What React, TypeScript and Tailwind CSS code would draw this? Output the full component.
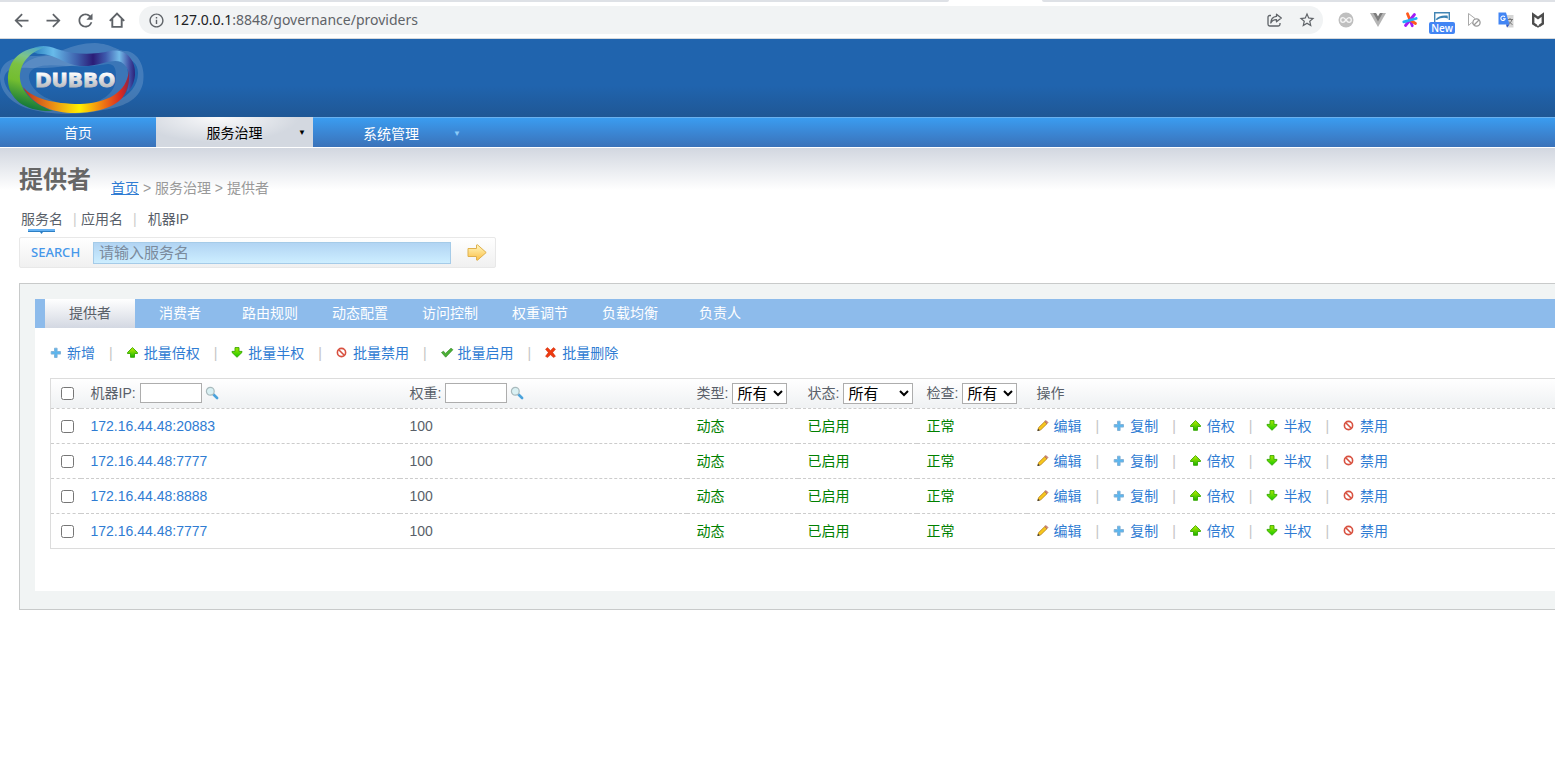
import type { ReactNode } from "react";
import { MdArrowBack, MdArrowForward, MdInfoOutline, MdRefresh, MdStarOutline } from "react-icons/md";

const menus = ["提供者", "消费者", "路由规则", "动态配置", "访问控制", "权重调节", "负载均衡", "负责人"];

const providers = [
  { ip: "172.16.44.48:20883", weight: 100 },
  { ip: "172.16.44.48:7777", weight: 100 },
  { ip: "172.16.44.48:8888", weight: 100 },
  { ip: "172.16.44.48:7777", weight: 100 },
];

const PlusIcon = () => (
  <svg width="12" height="12" viewBox="0 0 12 12" aria-hidden="true">
    <path d="M4.500 1.200h2.600v3.300h3.400v2.600H7.100v3.400H4.500V7.100H1.200V4.500h3.300z" fill="#5cb6ee" stroke="#7fb0d6" strokeWidth="0.9" strokeLinejoin="round" />
  </svg>
);

const UpIcon = () => (
  <svg width="12" height="12" viewBox="0 0 12 12" aria-hidden="true">
    <defs>
      <linearGradient id="up" x2="0" y2="1">
        <stop offset="0" stopColor="#c0f000" />
        <stop offset="1" stopColor="#18b400" />
      </linearGradient>
    </defs>
    <path d="M5.500.6 10.500 5.500v1H7.500v3.800h-4V6.500h-3v-1z" fill="url(#up)" stroke="#36a800" strokeWidth="0.9" />
  </svg>
);

const DownIcon = () => (
  <svg width="12" height="12" viewBox="0 0 12 12" aria-hidden="true">
    <defs>
      <linearGradient id="down" x2="0" y2="1">
        <stop offset="0" stopColor="#a5e800" />
        <stop offset="1" stopColor="#18c800" />
      </linearGradient>
    </defs>
    <path d="M4 .6h4v3.800h3v1L6 10.300 1 5.400v-1h3z" fill="url(#down)" stroke="#36a800" strokeWidth="0.9" />
  </svg>
);

const BanIcon = () => (
  <svg width="12" height="12" viewBox="0 0 12 12" fill="none" aria-hidden="true">
    <circle cx="5.500" cy="5.500" r="4.100" stroke="#d8503f" strokeWidth="1.600" />
    <path d="m2.700 2.700 5.600 5.600" stroke="#d8503f" strokeWidth="1.600" />
  </svg>
);

const CheckIcon = () => (
  <svg width="13" height="12" viewBox="0 0 13 12" aria-hidden="true">
    <path d="M.5 5.500 2.500 4.200l2 2.200 5.500-5.200 1.900 1.500L4.700 10.200z" fill="#4bb035" stroke="#378a28" strokeWidth="0.7" />
  </svg>
);

const DeleteIcon = () => (
  <svg width="12" height="12" viewBox="0 0 12 12" aria-hidden="true">
    <path d="M.5 2.200 2.500.6l3 2.800L8.500.6l2 1.600L7.700 5.600l2.800 3.700-2 1.200-3-2.700-3 2.700-2-1.200 2.800-3.700z" fill="#ee3a10" stroke="#c82c0c" strokeWidth="0.5" />
  </svg>
);

const PencilIcon = () => (
  <svg width="12" height="12" viewBox="0 0 12 12" aria-hidden="true">
    <path d="m.8 10.500.8-2.900L7.800 1.500 10 3.700 3.800 9.800z" fill="#f7c61c" stroke="#b5801c" strokeWidth="0.8" />
    <path d="M7.800 1.500 9 .5l2 2L10 3.700z" fill="#d98a7c" stroke="#a0604e" strokeWidth="0.6" />
    <path d="m.4 11 .7-2.300 1.700 1.700z" fill="#333" />
  </svg>
);

const SearchIcon = () => (
  <svg width="14" height="14" viewBox="0 0 14 14" fill="none" aria-hidden="true">
    <path d="m8.500 8.500 3.600 3.500" stroke="#4ba3dc" strokeWidth="2.600" strokeLinecap="round" />
    <circle cx="5.300" cy="5.300" r="3.900" fill="#d9f0f3" stroke="#a9babd" strokeWidth="1.200" />
  </svg>
);

const Logo = () => (
  <svg width="150" height="78" viewBox="0 0 150 78" role="img" aria-label="Dubbo">
    <defs>
      <linearGradient id="green" x1="0.7" x2="0.5" y2="1">
        <stop offset="0" stopColor="#4ba6cc" />
        <stop offset="0.2" stopColor="#7cc48a" />
        <stop offset="0.35" stopColor="#7cc142" />
        <stop offset="0.6" stopColor="#73bd30" />
        <stop offset="1" stopColor="#08703c" />
      </linearGradient>
      <linearGradient id="blue">
        <stop offset="0" stopColor="#2179b8" />
        <stop offset="0.22" stopColor="#68bbea" />
        <stop offset="0.45" stopColor="#3d5fac" />
        <stop offset="0.6" stopColor="#2b1c77" />
        <stop offset="0.72" stopColor="#3d5aad" />
        <stop offset="0.85" stopColor="#73bbe9" />
        <stop offset="0.95" stopColor="#3f4ca2" />
        <stop offset="1" stopColor="#2c2278" />
      </linearGradient>
      <linearGradient id="fire">
        <stop offset="0" stopColor="#b92f20" />
        <stop offset="0.25" stopColor="#e88218" />
        <stop offset="0.53" stopColor="#fff000" />
        <stop offset="0.76" stopColor="#ee7514" />
        <stop offset="0.92" stopColor="#d92a20" />
        <stop offset="1" stopColor="#8f2548" />
      </linearGradient>
      <linearGradient id="metal" x2="0" y2="1">
        <stop offset="0.2" stopColor="#fff" />
        <stop offset="0.8" stopColor="#b9bbc0" />
      </linearGradient>
    </defs>
    <g fill="#fff" fillRule="evenodd">
      <path fillOpacity="0.16" d="M0 38C0 22 14 17 36 17 58 17 70 4 95 4c18 1 22 8 31 8 12 1 20 16 17 32-4 18-21 24-40 27-26 6-55 5-77-2C10 63 0 52 0 38zm4 2c2 20 30 31 62 31 38 0 72-11 72-37 0-10-7-16-20-15-20 5-33 7-60 9-30 4-52-6-54 12z" />
      <path fillOpacity="0.12" d="M19 38c0-14 14-21 30-21 26 2 52 4 66 0 8 2 13 10 13 19 0 20-19 33-48 33-36 0-61-15-61-31zm10 1c2 15 24 27 49 27 22 0 38-12 38-27 0-9-1-14-8-14-14 2-24 3-42 2-20-2-38-1-37 12z" />
    </g>
    <path d="M30 11c7-5 17-5 27-1 18 6 36 6 53 2 15-3 26 8 25 24-1 9-4 14-8 17 4-13 3-25-6-30-9-4-20 4-38 4-17 0-25-11-42-12-5 0-8-2-11-4z" fill="url(#blue)" />
    <path d="M8 42C7 19 24 7 46 8 29 13 19 25 20 40c2 15 17 27 33 32C26 73 9 61 8 42z" fill="url(#green)" />
    <path d="M23 48c9 11 30 17 57 17 27-1 47-11 49-34 2 24-9 35-29 40-29 7-64 3-77-23z" fill="url(#fire)" />
    <text x="35" y="48" fontSize="20" fontWeight="700" fontFamily="DejaVu Sans, sans-serif" fill="url(#metal)" stroke="url(#metal)" strokeWidth="0.8">
      DUBBO
    </text>
  </svg>
);

const BrowserButton = ({ label, children }: { label: string; children: ReactNode }) => (
  <button type="button" aria-label={label} className="flex h-7 w-8 shrink-0 items-center justify-center text-[#5f6368]">
    {children}
  </button>
);

const BrowserBar = () => (
  <div className="border-b border-[#d5d8dc] bg-white">
    <div className="flex h-[2px] justify-between">
      <div className="w-[61%] rounded-br bg-[#dee1e6]" />
      <div className="w-[33%] rounded-bl bg-[#dee1e6]" />
    </div>
    <div className="flex h-9 items-center pr-px pl-[5px]">
      <BrowserButton label="Back"><MdArrowBack size={21} /></BrowserButton>
      <BrowserButton label="Forward"><MdArrowForward size={21} /></BrowserButton>
      <BrowserButton label="Reload"><MdRefresh size={21} /></BrowserButton>
      <BrowserButton label="Home">
        <svg width="16" height="16" viewBox="0 0 16 16" fill="none" stroke="currentColor" strokeWidth="1.900">
          <path d="M.8 8.800 8 1.600l7.200 7.200M3.300 7v7.900h9.400V7" />
        </svg>
      </BrowserButton>
      <div className="ml-[6px] mr-[7px] flex h-7 grow items-center rounded-full bg-[#f1f3f4] pl-[9px]">
        <MdInfoOutline size={17} className="text-[#5f6368]" />
        <div className="ml-2 grow font-['Noto_Sans',sans-serif] text-sm text-[#5f6368]">
          <span className="text-[#202124]">127.0.0.1</span>:8848/governance/providers
        </div>
        <BrowserButton label="Share">
          <svg width="16" height="16" viewBox="0 0 16 16" fill="none" stroke="currentColor" strokeWidth="1.3" strokeLinejoin="round">
            <path d="M4 3.500H2.700A1.700 1.700 0 0 0 1 5.200v7.100A1.700 1.700 0 0 0 2.700 14h8.600a1.700 1.700 0 0 0 1.700-1.700V11" />
            <path d="M9.500 2.200 14.300 6 9.500 9.800V7.600C6.500 7.500 4.900 8.700 3.800 11c.2-4 2.200-6.300 5.700-6.600z" />
          </svg>
        </BrowserButton>
        <BrowserButton label="Bookmark"><MdStarOutline size={18} /></BrowserButton>
      </div>
      <BrowserButton label="Infinity">
        <svg width="16" height="16" viewBox="0 0 16 16" fill="none">
          <circle cx="8" cy="8" r="7.500" fill="#bfbfbf" />
          <path d="M8 8C6.500 6 5.700 5.700 5 5.700a2.300 2.300 0 0 0 0 4.600C5.700 10.300 6.500 10 8 8s2.300-2.300 3-2.300a2.300 2.300 0 0 1 0 4.600c-.7 0-1.500-.3-3-2.300z" stroke="#f5f5f5" strokeWidth="1.300" />
        </svg>
      </BrowserButton>
      <BrowserButton label="Vue">
        <svg width="16" height="14" viewBox="0 0 16 14">
          <path d="M0 0h16L8 14z" fill="#b5b5b5" />
          <path d="M3.200 0h3L8 3.200 9.800 0h3L8 8.500z" fill="#7d7d7d" />
          <path d="M6.200 0h3.600L8 3.200z" fill="#fff" />
        </svg>
      </BrowserButton>
      <BrowserButton label="Spark">
        <svg width="16" height="16" viewBox="0 0 16 16" strokeWidth="2.800" strokeLinecap="round">
          <path d="M5.500 1.800 8 8" stroke="#ff5a1f" />
          <path d="m8 8 2.300 5.800" stroke="#a01cf5" />
          <path d="M12.500 2.500 8 8" stroke="#a01cf5" />
          <path d="m8 8-4.500 5.500" stroke="#a01cf5" />
          <path d="m8 8 5.500 3.500" stroke="#ff5a1f" />
          <path d="m1.800 9.800 12.400-3.300" stroke="#22aef5" />
        </svg>
      </BrowserButton>
      <BrowserButton label="Capture">
        <span className="flex flex-col items-center pt-[6px]">
          <svg width="16" height="10" viewBox="0 0 16 10" fill="none">
            <path d="M.7 10V.7h14.600V8" stroke="#4285b4" strokeWidth="1.400" />
            <path d="M1.500 7.500C4 4 8 3 13.500 3.500l.5 3C10 5 6 6 3 8z" fill="#3a83b4" />
          </svg>
          <span className="rounded-xs bg-[#4285f4] px-[2px] font-['Open_Sans',sans-serif] text-[10px] leading-3 font-semibold text-white">New</span>
        </span>
      </BrowserButton>
      <BrowserButton label="Cursor">
        <svg width="16" height="16" viewBox="0 0 16 16" fill="none" stroke="#aaa">
          <path d="M2.500 1.500v12l3-2.700 1.500.7M2.500 1.500 9 6.500" />
          <circle cx="10.500" cy="10.500" r="3.600" stroke="#999" strokeWidth="1.300" />
          <path d="m8 13 5-5" stroke="#999" strokeWidth="1.300" />
        </svg>
      </BrowserButton>
      <BrowserButton label="Translate">
        <svg width="16" height="16" viewBox="0 0 16 16">
          <path d="M6 3h9.500v12.500H9z" fill="#d5d5d5" />
          <path d="M9.500 7.500H15M12 6v1.500m2 0c-.8 2.500-2 3.800-3.600 4.600m.6-2.600c.7 1.300 2 2.400 3.500 3" stroke="#777" fill="none" />
          <path d="M.5.500h7.500L11.500 12.500H.5z" fill="#4285f4" />
          <path d="m8 12.500 3.500 0L9 15.500z" fill="#2a56c6" />
          <path d="M6.900 5A2.200 2.200 0 1 0 7.200 6.800H5" stroke="#fff" strokeWidth="1.100" fill="none" />
        </svg>
      </BrowserButton>
      <BrowserButton label="Shield">
        <svg width="14" height="16" viewBox="0 0 14 16" fill="none" stroke="#4d4d4d" strokeWidth="2.400">
          <path d="M5.500 13.800 2.200 11.500V2.500L7 6l4.800-3.500v9l-3.300 2.300" />
          <path d="m5 13.500 2 1.300 2-1.300" strokeWidth="1.500" />
        </svg>
      </BrowserButton>
    </div>
  </div>
);

const Header = () => (
  <header>
    <div className="h-[78px] bg-linear-to-b from-[#2064ae] from-60% to-[#1f5795]">
      <Logo />
    </div>
    <nav className="flex h-[30px] border-t border-[#6ab1ef] bg-linear-to-b from-[#3a9cf0] to-[#3a72b9] text-white">
      <a href="#home" className="flex w-[156px] items-center justify-center">首页</a>
      <a
        href="#governance"
        className="relative -mt-px flex w-[157px] items-center justify-center bg-[radial-gradient(ellipse_at_40%_0%,#fafafb,#d3d8e0_60%)] pt-[2px] text-black"
      >
        服务治理
        <span className="absolute right-[7px] text-[8px]">▼</span>
      </a>
      <a href="#system" className="relative flex w-[156px] items-center justify-center pt-[3px]">
        系统管理
        <span className="absolute right-[8px] text-[8px] text-[#8ccbf8]">▼</span>
      </a>
    </nav>
  </header>
);

const Divider = () => <span className="mr-[14px] ml-[14px] text-[#c4c4c4]">|</span>;

const Action = ({ icon, children }: { icon: ReactNode; children: ReactNode }) => (
  <a href="#action" className="flex items-center text-[#2f7cd3]">
    <span className="w-[17px] shrink-0">{icon}</span>
    {children}
  </a>
);

const SearchForm = () => (
  <form className="mt-2 flex h-[31px] w-[477px] items-center rounded-xs border border-[#e8e8e8] bg-linear-to-b from-white to-[#f0f0f0]">
    <label htmlFor="service" className="w-[73px] pl-[11px] font-['Noto_Sans',sans-serif] text-[13px] font-medium text-[#4697ea]">
      SEARCH
    </label>
    <input
      id="service"
      type="text"
      placeholder="请输入服务名"
      className="h-[22px] w-[358px] border border-[#a5cbe8] bg-linear-to-b from-[#b1d4f3] to-[#cdeeff] px-[5px] text-[15px] placeholder:text-[#7b8b9d]"
    />
    <button type="submit" aria-label="搜索" className="ml-4">
      <svg width="20" height="17" viewBox="0 0 20 17">
        <defs>
          <linearGradient id="go" x2="0" y2="1">
            <stop offset="0" stopColor="#fff7c0" />
            <stop offset="1" stopColor="#fbbf45" />
          </linearGradient>
        </defs>
        <path d="M1 4.500h8.500v-3.500l1-.2 8.700 7.700-8.700 7.700-1-.2v-3.500H1z" fill="url(#go)" stroke="#dfb04c" strokeLinejoin="round" />
      </svg>
    </button>
  </form>
);

const FilterInput = ({ id, label }: { id: string; label: string }) => (
  <div className="flex items-center pb-px">
    <label htmlFor={id}>{label}:</label>
    <input id={id} type="text" className="ml-1 h-5 w-[62px] border border-[#adadad] bg-white px-1" />
    <button type="button" aria-label={`搜索${label}`} className="ml-[3px] pb-px"><SearchIcon /></button>
  </div>
);

const FilterSelect = ({ id, label, options }: { id: string; label: string; options: string[] }) => (
  <div className="flex items-center pb-px">
    <label htmlFor={id}>{label}:</label>
    <select
      id={id}
      className={
        id === "status"
          ? "ml-1 h-[21px] w-[70px] border border-[#adadad] bg-white text-[15px] leading-[19px] text-black"
          : "ml-1 h-[21px] w-[55px] border border-[#adadad] bg-white text-[15px] leading-[19px] text-black"
      }
    >
      <option>所有</option>
      {options.map((option) => (
        <option key={option}>{option}</option>
      ))}
    </select>
  </div>
);

const ProviderTable = () => (
  <table className="mt-[15px] w-full table-fixed border-collapse border border-r-0 border-[#dcdcdc] text-left">
    <colgroup>
      <col className="w-[30px]" />
      <col className="w-[319px]" />
      <col className="w-[287px]" />
      <col className="w-[111px]" />
      <col className="w-[119px]" />
      <col className="w-[110px]" />
      <col />
    </colgroup>
    <thead>
      <tr className="h-[30px] border-b border-dashed border-[#ccc] bg-linear-to-b from-white to-[#eff1f3] *:pl-[10px] *:font-normal">
        <th><input type="checkbox" aria-label="全选" className="block size-[13px]" /></th>
        <th><FilterInput id="ip" label="机器IP" /></th>
        <th><FilterInput id="weight" label="权重" /></th>
        <th><FilterSelect id="type" label="类型" options={["动态", "静态"]} /></th>
        <th><FilterSelect id="status" label="状态" options={["已启用", "已禁用"]} /></th>
        <th><FilterSelect id="check" label="检查" options={["正常"]} /></th>
        <th className="pb-px">操作</th>
      </tr>
    </thead>
    <tbody>
      {providers.map(({ ip, weight }, index) => (
        <tr key={index} className="h-[35px] border-b border-dashed border-[#ccc] last:border-solid last:border-[#dcdcdc] *:pl-[10px]">
          <td><input type="checkbox" aria-label={ip} className="block size-[13px]" /></td>
          <td><a href="#provider" className="text-[#2f7cd3]">{ip}</a></td>
          <td>{weight}</td>
          <td className="text-[#008000]">动态</td>
          <td className="text-[#008000]">已启用</td>
          <td className="text-[#008000]">正常</td>
          <td>
            <div className="flex items-center whitespace-nowrap">
              <Action icon={<PencilIcon />}>编辑</Action>
              <Divider />
              <Action icon={<PlusIcon />}>复制</Action>
              <Divider />
              <Action icon={<UpIcon />}>倍权</Action>
              <Divider />
              <Action icon={<DownIcon />}>半权</Action>
              <Divider />
              <Action icon={<BanIcon />}>禁用</Action>
            </div>
          </td>
        </tr>
      ))}
    </tbody>
  </table>
);

export default function App() {
  return (
    <div className="min-h-screen bg-white font-['Liberation_Sans','Noto_Sans_CJK_SC',sans-serif] text-sm text-[#595f69]">
      <BrowserBar />
      <Header />

      <main className="mt-px bg-[linear-gradient(#d2d7e0,#fff_42px)] pt-4 pl-[19px]">
        <div className="flex items-end">
          <h1 className="text-2xl leading-8 font-bold text-[#666]">提供者</h1>
          <p className="ml-5 leading-4 text-[#999]">
            <a href="#home" className="text-[#2f7cd3] underline">首页</a> &gt; 服务治理 &gt; 提供者
          </p>
        </div>

        <div className="mt-[13px] flex pl-[2px] leading-5">
          <a href="#service" className="relative">
            服务名
            <svg className="absolute top-5 left-[7px]" width="27" height="5" viewBox="0 0 27 5" aria-hidden="true">
              <path d="M0 0h27v2H0z" fill="#66b3f5" />
              <path d="M0 2h27v1H15l-1.500 2L12 3H0z" fill="#2d7fc4" />
            </svg>
          </a>
          <span className="ml-[10px] w-2 text-[#ccc]">|</span>
          <a href="#application">应用名</a>
          <span className="mr-[11px] ml-[10px] text-[#ccc]">|</span>
          <a href="#machine">机器IP</a>
        </div>

        <SearchForm />

        <section className="mt-[15px] border border-r-0 border-[#c8caca] bg-[#f1f4f4] pt-[15px] pb-[18px] pl-[15px]">
          <nav className="flex h-[29px] bg-[#8dbbeb] pl-[10px] leading-7">
            {menus.map((menu, index) => (
              <a
                key={menu}
                href="#menu"
                className={
                  index === 0
                    ? "w-[90px] bg-linear-to-b from-white to-[#d3d8e2] text-center"
                    : "w-[90px] text-center text-white"
                }
              >
                {menu}
              </a>
            ))}
          </nav>

          <div className="bg-white pt-[15px] pb-[42px] pl-[15px]">
            <div className="flex items-center leading-5">
              <Action icon={<PlusIcon />}>新增</Action>
              <Divider />
              <Action icon={<UpIcon />}>批量倍权</Action>
              <Divider />
              <Action icon={<DownIcon />}>批量半权</Action>
              <Divider />
              <Action icon={<BanIcon />}>批量禁用</Action>
              <Divider />
              <Action icon={<CheckIcon />}>批量启用</Action>
              <Divider />
              <Action icon={<DeleteIcon />}>批量删除</Action>
            </div>
            <ProviderTable />
          </div>
        </section>
      </main>
    </div>
  );
}
